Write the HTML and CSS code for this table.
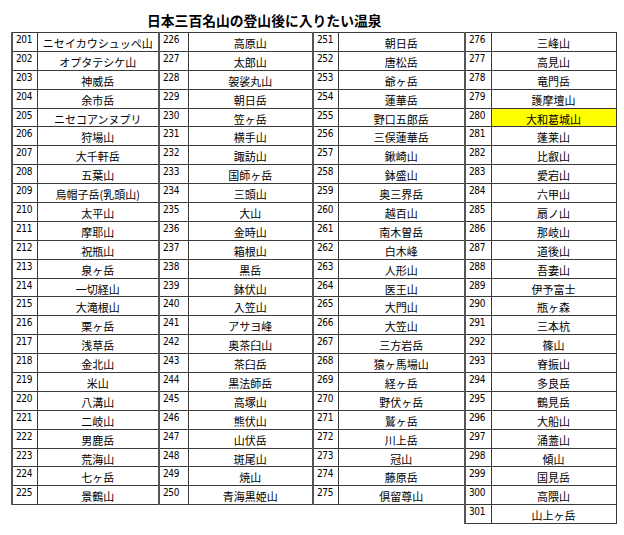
FILE: index.html
```html
<!DOCTYPE html>
<html lang="ja">
<head>
<meta charset="utf-8">
<title>日本三百名山の登山後に入りたい温泉</title>
<link rel="stylesheet" href="styles.css">
</head>
<body>
<h1 class="title">日本三百名山の登山後に入りたい温泉</h1>
<table class="grid">
<colgroup>
<col class="c-n1"><col class="c-m1"><col class="c-n2"><col class="c-m2"><col class="c-n3"><col class="c-m3"><col class="c-n4"><col class="c-m4">
</colgroup>
<tbody>
<tr><td class="num">201</td><td class="name">ニセイカウシュッペ山</td><td class="num">226</td><td class="name">高原山</td><td class="num">251</td><td class="name">朝日岳</td><td class="num">276</td><td class="name">三峰山</td></tr>
<tr><td class="num">202</td><td class="name">オプタテシケ山</td><td class="num">227</td><td class="name">太郎山</td><td class="num">252</td><td class="name">唐松岳</td><td class="num">277</td><td class="name">高見山</td></tr>
<tr><td class="num">203</td><td class="name">神威岳</td><td class="num">228</td><td class="name">袈裟丸山</td><td class="num">253</td><td class="name">爺ヶ岳</td><td class="num">278</td><td class="name">竜門岳</td></tr>
<tr><td class="num">204</td><td class="name">余市岳</td><td class="num">229</td><td class="name">朝日岳</td><td class="num">254</td><td class="name">蓮華岳</td><td class="num">279</td><td class="name">護摩壇山</td></tr>
<tr><td class="num">205</td><td class="name">ニセコアンヌプリ</td><td class="num">230</td><td class="name">笠ヶ岳</td><td class="num">255</td><td class="name">野口五郎岳</td><td class="num">280</td><td class="name hl">大和葛城山</td></tr>
<tr><td class="num">206</td><td class="name">狩場山</td><td class="num">231</td><td class="name">横手山</td><td class="num">256</td><td class="name">三俣蓮華岳</td><td class="num">281</td><td class="name">蓬莱山</td></tr>
<tr><td class="num">207</td><td class="name">大千軒岳</td><td class="num">232</td><td class="name">諏訪山</td><td class="num">257</td><td class="name">鍬崎山</td><td class="num">282</td><td class="name">比叡山</td></tr>
<tr><td class="num">208</td><td class="name">五葉山</td><td class="num">233</td><td class="name">国師ヶ岳</td><td class="num">258</td><td class="name">鉢盛山</td><td class="num">283</td><td class="name">愛宕山</td></tr>
<tr><td class="num">209</td><td class="name">烏帽子岳(乳頭山)</td><td class="num">234</td><td class="name">三頭山</td><td class="num">259</td><td class="name">奥三界岳</td><td class="num">284</td><td class="name">六甲山</td></tr>
<tr><td class="num">210</td><td class="name">太平山</td><td class="num">235</td><td class="name">大山</td><td class="num">260</td><td class="name">越百山</td><td class="num">285</td><td class="name">扇ノ山</td></tr>
<tr><td class="num">211</td><td class="name">摩耶山</td><td class="num">236</td><td class="name">金時山</td><td class="num">261</td><td class="name">南木曽岳</td><td class="num">286</td><td class="name">那岐山</td></tr>
<tr><td class="num">212</td><td class="name">祝瓶山</td><td class="num">237</td><td class="name">箱根山</td><td class="num">262</td><td class="name">白木峰</td><td class="num">287</td><td class="name">道後山</td></tr>
<tr><td class="num">213</td><td class="name">泉ヶ岳</td><td class="num">238</td><td class="name">黒岳</td><td class="num">263</td><td class="name">人形山</td><td class="num">288</td><td class="name">吾妻山</td></tr>
<tr><td class="num">214</td><td class="name">一切経山</td><td class="num">239</td><td class="name">鉢伏山</td><td class="num">264</td><td class="name">医王山</td><td class="num">289</td><td class="name">伊予富士</td></tr>
<tr><td class="num">215</td><td class="name">大滝根山</td><td class="num">240</td><td class="name">入笠山</td><td class="num">265</td><td class="name">大門山</td><td class="num">290</td><td class="name">瓶ヶ森</td></tr>
<tr><td class="num">216</td><td class="name">栗ヶ岳</td><td class="num">241</td><td class="name">アサヨ峰</td><td class="num">266</td><td class="name">大笠山</td><td class="num">291</td><td class="name">三本杭</td></tr>
<tr><td class="num">217</td><td class="name">浅草岳</td><td class="num">242</td><td class="name">奥茶臼山</td><td class="num">267</td><td class="name">三方岩岳</td><td class="num">292</td><td class="name">篠山</td></tr>
<tr><td class="num">218</td><td class="name">金北山</td><td class="num">243</td><td class="name">茶臼岳</td><td class="num">268</td><td class="name">猿ヶ馬場山</td><td class="num">293</td><td class="name">脊振山</td></tr>
<tr><td class="num">219</td><td class="name">米山</td><td class="num">244</td><td class="name">黒法師岳</td><td class="num">269</td><td class="name">経ヶ岳</td><td class="num">294</td><td class="name">多良岳</td></tr>
<tr><td class="num">220</td><td class="name">八溝山</td><td class="num">245</td><td class="name">高塚山</td><td class="num">270</td><td class="name">野伏ヶ岳</td><td class="num">295</td><td class="name">鶴見岳</td></tr>
<tr><td class="num">221</td><td class="name">二岐山</td><td class="num">246</td><td class="name">熊伏山</td><td class="num">271</td><td class="name">鷲ヶ岳</td><td class="num">296</td><td class="name">大船山</td></tr>
<tr><td class="num">222</td><td class="name">男鹿岳</td><td class="num">247</td><td class="name">山伏岳</td><td class="num">272</td><td class="name">川上岳</td><td class="num">297</td><td class="name">涌蓋山</td></tr>
<tr><td class="num">223</td><td class="name">荒海山</td><td class="num">248</td><td class="name">斑尾山</td><td class="num">273</td><td class="name">冠山</td><td class="num">298</td><td class="name">傾山</td></tr>
<tr><td class="num">224</td><td class="name">七ヶ岳</td><td class="num">249</td><td class="name">焼山</td><td class="num">274</td><td class="name">藤原岳</td><td class="num">299</td><td class="name">国見岳</td></tr>
<tr><td class="num">225</td><td class="name">景鶴山</td><td class="num">250</td><td class="name">青海黒姫山</td><td class="num">275</td><td class="name">倶留尊山</td><td class="num">300</td><td class="name">高隈山</td></tr>
<tr><td class="blank"></td><td class="blank"></td><td class="blank"></td><td class="blank"></td><td class="blank"></td><td class="blank"></td><td class="num">301</td><td class="name">山上ヶ岳</td></tr>
</tbody>
</table>
</body>
</html>
```
FILE: styles.css
```css
html, body {
  margin: 0;
  padding: 0;
  background: #ffffff;
}

body {
  font-family: "Noto Sans CJK JP", "Noto Sans", sans-serif;
  color: #000;
}

.title {
  margin: 0;
  height: 32px;
  box-sizing: border-box;
  padding: 12px 0 0 147px;
  font-size: 13.8px;
  line-height: 16px;
  font-weight: bold;
  white-space: nowrap;
}

.grid {
  margin-left: 11px;
  border-collapse: collapse;
  table-layout: fixed;
  width: 604px;
}

.c-n1 { width: 25px; }
.c-m1 { width: 122px; }
.c-n2 { width: 29px; }
.c-m2 { width: 125px; }
.c-n3 { width: 25px; }
.c-m3 { width: 127px; }
.c-n4 { width: 26px; }
.c-m4 { width: 125px; }

.grid tr {
  height: 18.9px;
}

.grid td {
  padding: 0;
  border: 1px solid #3a3a3a;
  overflow: hidden;
  white-space: nowrap;
}

.grid td.num {
  border-left: 2px solid #555;
  vertical-align: top;
  padding: 1px 0 0 3px;
  font-family: "Liberation Sans Narrow", "DejaVu Sans Condensed", "Liberation Sans", sans-serif;
  font-stretch: condensed;
  font-size: 10px;
  line-height: 11px;
  letter-spacing: -0.4px;
}

.grid td.name {
  text-align: center;
  vertical-align: middle;
  font-size: 11px;
  line-height: 14px;
  padding-top: 2px;
}

.grid td.hl {
  background: #ffff00;
}

.grid td.blank {
  border: none;
}
```
